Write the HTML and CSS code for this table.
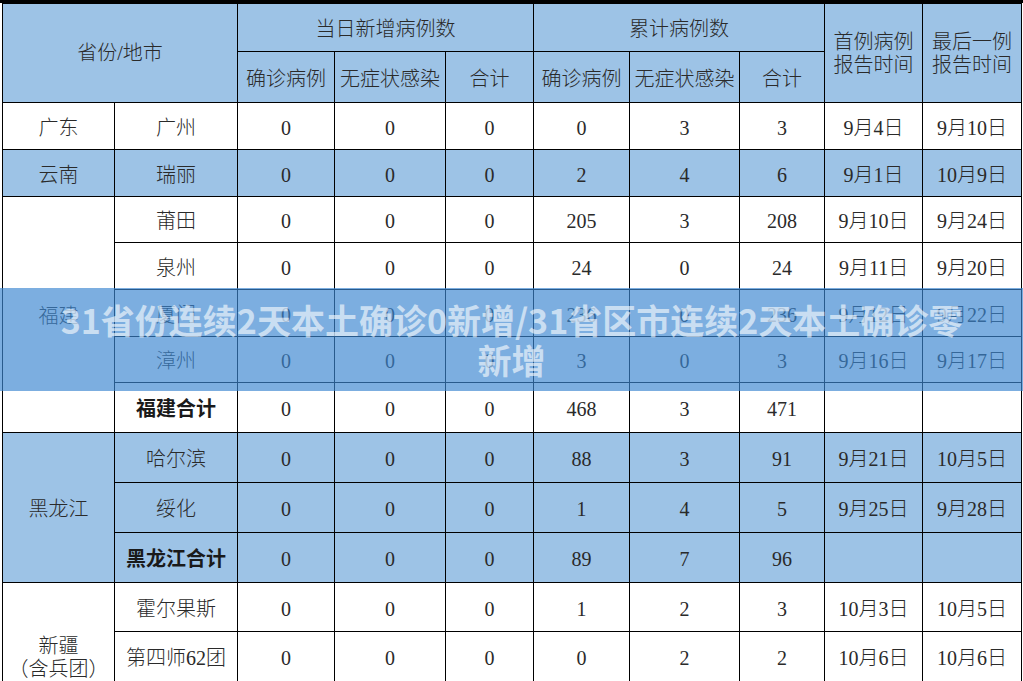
FILE: index.html
```html
<!DOCTYPE html>
<html lang="zh">
<head>
<meta charset="utf-8">
<title>本土病例统计</title>
<link rel="stylesheet" href="styles.css">
</head>
<body>
<div class="page">
  <div class="topbar"></div>
  <table class="stats">
    <colgroup>
      <col class="c1"><col class="c2"><col class="c3"><col class="c4"><col class="c5">
      <col class="c6"><col class="c7"><col class="c8"><col class="c9"><col class="c10">
    </colgroup>
    <thead>
      <tr class="h1 blue">
        <th colspan="2" rowspan="2" class="corner">省份/地市</th>
        <th colspan="3">当日新增病例数</th>
        <th colspan="3">累计病例数</th>
        <th rowspan="2" class="two">首例病例<br>报告时间</th>
        <th rowspan="2" class="two">最后一例<br>报告时间</th>
      </tr>
      <tr class="h2 blue">
        <th>确诊病例</th><th>无症状感染</th><th>合计</th>
        <th>确诊病例</th><th>无症状感染</th><th>合计</th>
      </tr>
    </thead>
    <tbody>
      <tr class="r47">
        <td>广东</td><td>广州</td><td>0</td><td>0</td><td>0</td><td>0</td><td>3</td><td>3</td><td>9月4日</td><td>9月10日</td>
      </tr>
      <tr class="r47 blue">
        <td>云南</td><td>瑞丽</td><td>0</td><td>0</td><td>0</td><td>2</td><td>4</td><td>6</td><td>9月1日</td><td>10月9日</td>
      </tr>
      <tr class="r46">
        <td rowspan="5">福建</td><td>莆田</td><td>0</td><td>0</td><td>0</td><td>205</td><td>3</td><td>208</td><td>9月10日</td><td>9月24日</td>
      </tr>
      <tr class="r47">
        <td>泉州</td><td>0</td><td>0</td><td>0</td><td>24</td><td>0</td><td>24</td><td>9月11日</td><td>9月20日</td>
      </tr>
      <tr class="r47">
        <td>厦门</td><td>0</td><td>0</td><td>0</td><td>236</td><td>0</td><td>236</td><td>9月12日</td><td>9月22日</td>
      </tr>
      <tr class="r46">
        <td>漳州</td><td>0</td><td>0</td><td>0</td><td>3</td><td>0</td><td>3</td><td>9月16日</td><td>9月17日</td>
      </tr>
      <tr class="r50">
        <td class="bold">福建合计</td><td>0</td><td>0</td><td>0</td><td>468</td><td>3</td><td>471</td><td></td><td></td>
      </tr>
      <tr class="r50 blue">
        <td rowspan="3">黑龙江</td><td>哈尔滨</td><td>0</td><td>0</td><td>0</td><td>88</td><td>3</td><td>91</td><td>9月21日</td><td>10月5日</td>
      </tr>
      <tr class="r50 blue">
        <td>绥化</td><td>0</td><td>0</td><td>0</td><td>1</td><td>4</td><td>5</td><td>9月25日</td><td>9月28日</td>
      </tr>
      <tr class="r50 blue">
        <td class="bold">黑龙江合计</td><td>0</td><td>0</td><td>0</td><td>89</td><td>7</td><td>96</td><td></td><td></td>
      </tr>
      <tr class="r49">
        <td rowspan="2" class="xj">新疆<br>（含兵团）</td><td>霍尔果斯</td><td>0</td><td>0</td><td>0</td><td>1</td><td>2</td><td>3</td><td>10月3日</td><td>10月5日</td>
      </tr>
      <tr class="r50">
        <td>第四师62团</td><td>0</td><td>0</td><td>0</td><td>0</td><td>2</td><td>2</td><td>10月6日</td><td>10月6日</td>
      </tr>
    </tbody>
  </table>
  <div class="banner">
    <p class="banner-text">31省份连续2天本土确诊0新增/31省区市连续2天本土确诊零新增</p>
  </div>
</div>
</body>
</html>
```

FILE: styles.css
```css
html, body {
  margin: 0;
  padding: 0;
  background: #ffffff;
}

.page {
  position: relative;
  width: 1023px;
  height: 681px;
  overflow: hidden;
}

.topbar {
  height: 3px;
  background: #000000;
}

.stats {
  margin-left: 2px;
  width: 1020px;
  table-layout: fixed;
  border-collapse: collapse;
  font-family: "Liberation Serif", "Noto Sans CJK SC", serif;
  font-size: 20px;
  font-weight: 300;
  color: #2a2a2a;
}

.c1 { width: 112px; }
.c2 { width: 123px; }
.c3 { width: 97px; }
.c4 { width: 111px; }
.c5 { width: 88px; }
.c6 { width: 96px; }
.c7 { width: 110px; }
.c8 { width: 85px; }
.c9 { width: 98px; }
.c10 { width: 99px; }

.stats th,
.stats td {
  border: 1px solid #000000;
  padding: 3px 0 0;
  text-align: center;
  vertical-align: middle;
  font-weight: 300;
  line-height: 24px;
  white-space: nowrap;
  overflow: hidden;
}

.stats th.corner {
  padding-top: 0;
}

.stats .two {
  line-height: 23px;
  padding-top: 1px;
}

.blue th,
.blue td {
  background: #9dc3e6;
}

.h1 { height: 48px; }
.h2 { height: 51px; }
.r46 { height: 46px; }
.r47 { height: 47px; }
.r49 { height: 49px; }
.r50 { height: 50px; }

.stats td.bold {
  font-weight: 700;
  color: #1a1a1a;
}

.stats td.xj {
  vertical-align: top;
  padding-top: 52px;
  line-height: 23px;
}

.banner {
  position: absolute;
  left: 0;
  right: 0;
  top: 288px;
  height: 103px;
  background: rgba(60, 134, 209, 0.67);
  display: flex;
  align-items: center;
  justify-content: center;
  padding: 0 45px;
}

.banner-text {
  margin: 0;
  text-align: center;
  font-family: "Noto Sans CJK SC", "Noto Sans", sans-serif;
  font-weight: 700;
  font-size: 34px;
  line-height: 40px;
  color: rgba(255, 255, 255, 0.6);
}
```
